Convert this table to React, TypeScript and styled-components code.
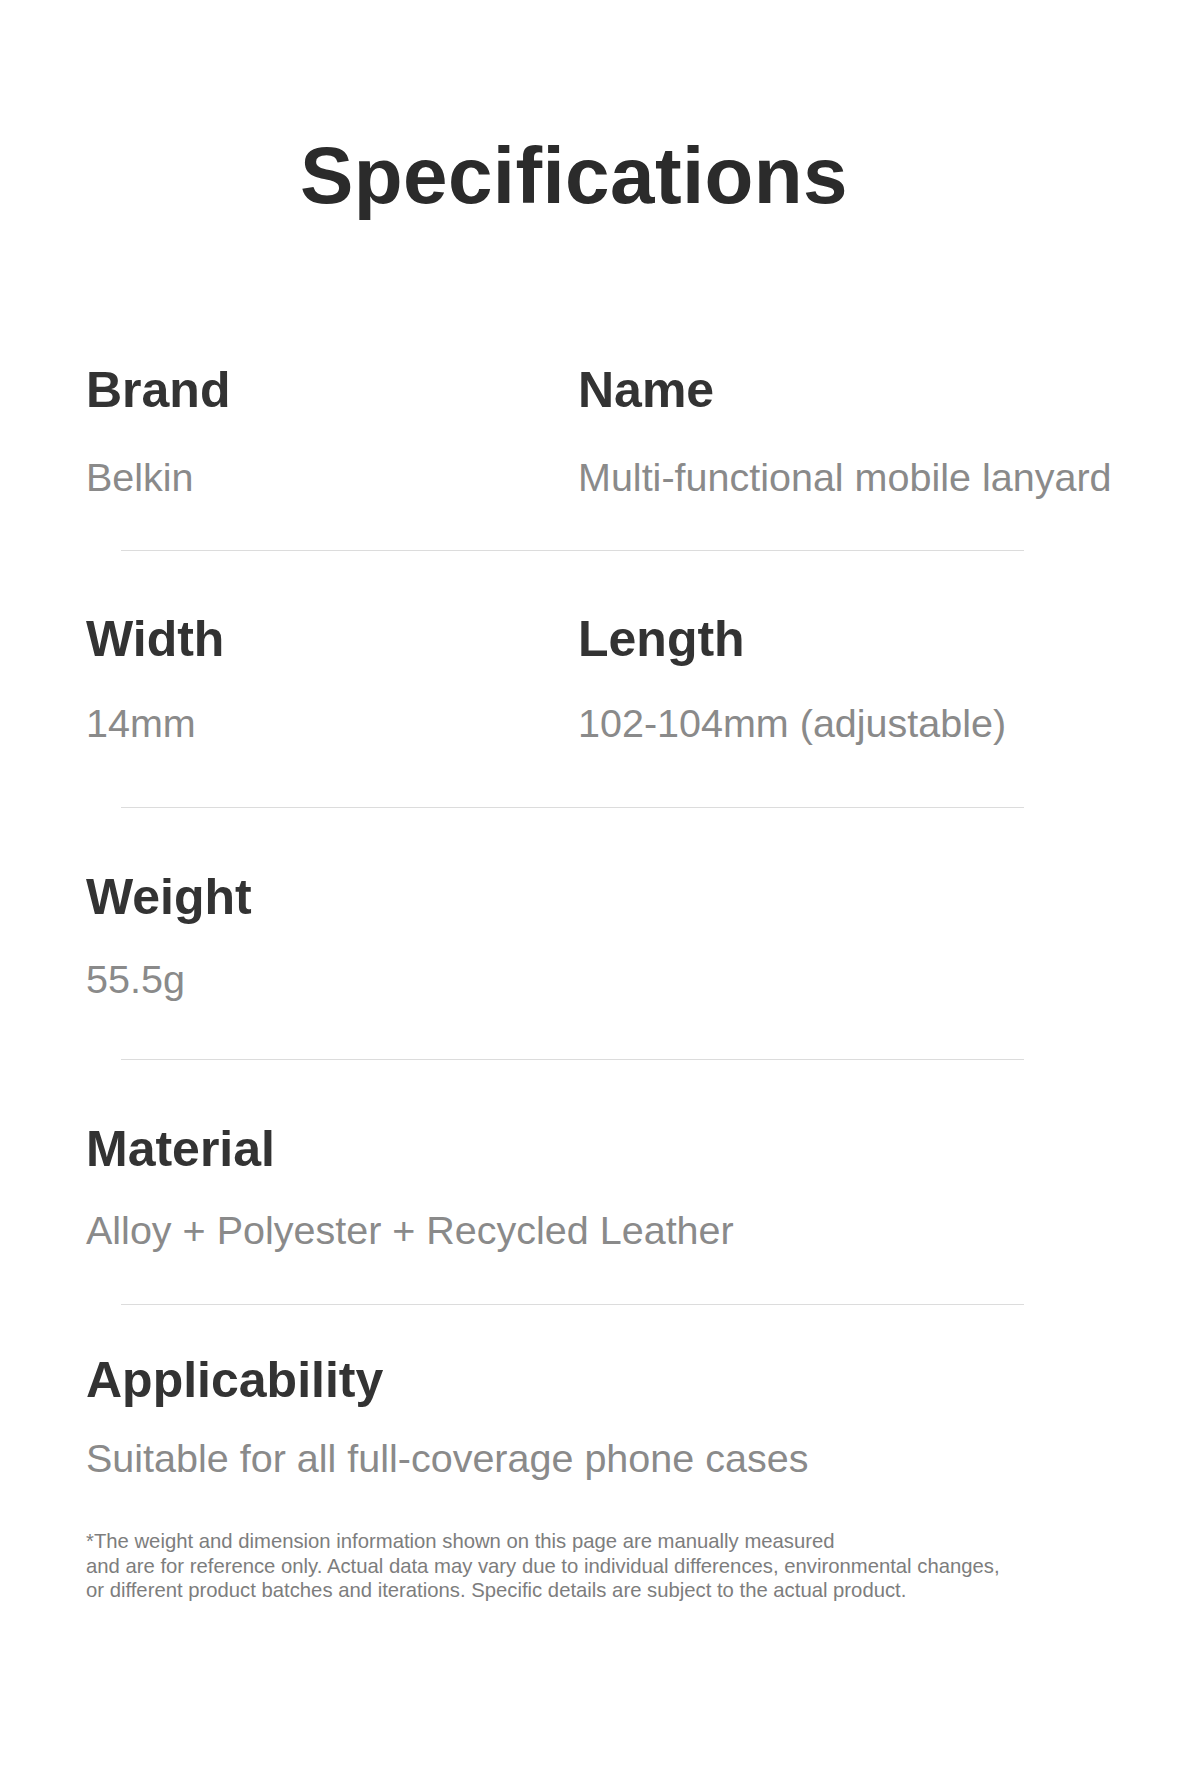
import React from "react";
import styled, { createGlobalStyle } from "styled-components";

const GlobalStyle = createGlobalStyle`
  html, body {
    margin: 0;
    padding: 0;
    background: #ffffff;
  }
  body {
    font-family: "Liberation Sans", Arial, sans-serif;
    -webkit-font-smoothing: antialiased;
  }
`;

const Page = styled.main`
  width: 1200px;
  min-height: 1776px;
  box-sizing: border-box;
  padding: 136px 0 0 86px;
  background: #ffffff;
`;

const Title = styled.h1`
  margin: 0 0 0 -86px;
  padding-right: 52px;
  text-align: center;
  font-family: "Liberation Sans", Arial, sans-serif;
  font-weight: 700;
  font-size: 80px;
  line-height: 80px;
  letter-spacing: 0.4px;
  color: #2b2b2b;
`;

const SpecList = styled.div`
  display: flex;
  flex-direction: column;
`;

const Section = styled.section<{ $padTop: number; $padBottom: number }>`
  display: grid;
  grid-template-columns: 492px auto;
  padding-top: ${(p) => p.$padTop}px;
  padding-bottom: ${(p) => p.$padBottom}px;
`;

const Field = styled.div<{ $gap: number }>`
  display: flex;
  flex-direction: column;
  gap: ${(p) => p.$gap}px;
`;

const Label = styled.h3`
  margin: 0;
  font-weight: 700;
  font-size: 50px;
  line-height: 60px;
  color: #333333;
  white-space: nowrap;
`;

const Value = styled.p`
  margin: 0;
  font-weight: 400;
  font-size: 39.5px;
  line-height: 46px;
  color: #8a8a8a;
  white-space: nowrap;
`;

const Divider = styled.hr`
  margin: 0 0 0 35px;
  width: 903px;
  height: 1px;
  border: none;
  background: #dcdcdc;
`;

const Footnote = styled.p`
  margin: 48px 0 0 0;
  font-size: 20.3px;
  line-height: 24.5px;
  color: #7d7d7d;
  white-space: nowrap;
`;

type Spec = { label: string; value: string };
type Row = {
  fields: Spec[];
  padTop: number;
  gap: number;
  padBottom: number;
  divider: boolean;
};

const rows: Row[] = [
  {
    fields: [
      { label: "Brand", value: "Belkin" },
      { label: "Name", value: "Multi-functional mobile lanyard" },
    ],
    padTop: 144,
    gap: 34,
    padBottom: 50,
    divider: true,
  },
  {
    fields: [
      { label: "Width", value: "14mm" },
      { label: "Length", value: "102-104mm (adjustable)" },
    ],
    padTop: 58,
    gap: 31,
    padBottom: 61,
    divider: true,
  },
  {
    fields: [{ label: "Weight", value: "55.5g" }],
    padTop: 59,
    gap: 29,
    padBottom: 57,
    divider: true,
  },
  {
    fields: [{ label: "Material", value: "Alloy + Polyester + Recycled Leather" }],
    padTop: 59,
    gap: 28,
    padBottom: 51,
    divider: true,
  },
  {
    fields: [{ label: "Applicability", value: "Suitable for all full-coverage phone cases" }],
    padTop: 45,
    gap: 25,
    padBottom: 0,
    divider: false,
  },
];

export default function App() {
  return (
    <>
      <GlobalStyle />
      <Page>
        <Title>Specifications</Title>
        <SpecList>
          {rows.map((row, i) => (
            <React.Fragment key={i}>
              <Section $padTop={row.padTop} $padBottom={row.padBottom}>
                {row.fields.map((f) => (
                  <Field key={f.label} $gap={row.gap}>
                    <Label>{f.label}</Label>
                    <Value>{f.value}</Value>
                  </Field>
                ))}
              </Section>
              {row.divider && <Divider />}
            </React.Fragment>
          ))}
        </SpecList>
        <Footnote>
          *The weight and dimension information shown on this page are manually measured
          <br />
          and are for reference only. Actual data may vary due to individual differences, environmental changes,
          <br />
          or different product batches and iterations. Specific details are subject to the actual product.
        </Footnote>
      </Page>
    </>
  );
}
